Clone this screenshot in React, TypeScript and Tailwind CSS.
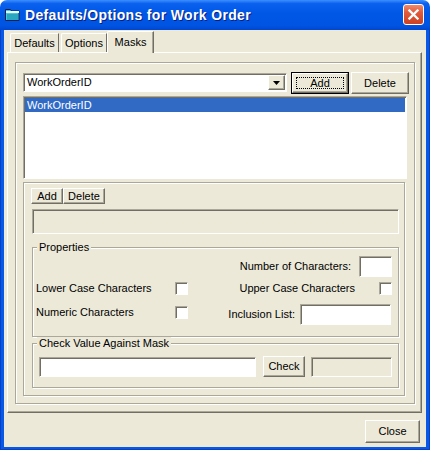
import React from "react";

const raised =
  "bg-[#ECE9D8] border border-t-white border-l-white border-r-[#716F64] border-b-[#716F64] shadow-[inset_-1px_-1px_0_#ACA899]";
const sunken =
  "border border-t-[#ACA899] border-l-[#ACA899] border-r-white border-b-white shadow-[inset_1px_1px_0_#716F64]";
const etched =
  "border border-[#ACA899] shadow-[inset_1px_1px_0_#fff,1px_1px_0_#fff]";

function Check() {
  return <div className={`w-[13px] h-[13px] shrink-0 bg-white ${sunken}`} />;
}

export default function App() {
  return (
    <div className="w-[430px] h-[450px] flex flex-col font-['Liberation_Sans',Arial,sans-serif] text-[11px] leading-[13px] text-black">
      {/* Title bar */}
      <div className="h-[30px] shrink-0 rounded-t-[7px] bg-[linear-gradient(to_bottom,#3D8FFF_0%,#0A61EE_12%,#0057E6_45%,#0054E2_85%,#0046D0_100%)] flex items-center">
        <svg width="15" height="13" viewBox="0 0 15 13" className="ml-[5px] mt-[-1px]">
          <path d="M0.5 1.5h5l1 1.5h7.5v9.5h-13.5z" fill="#47C7D6" stroke="#0B1F4F" />
          <rect x="1" y="3" width="13" height="2" fill="#E8FBFF" />
          <rect x="2" y="6" width="11" height="6" fill="#2AA7C0" />
        </svg>
        <span className="ml-[5px] text-white font-bold text-[14px] tracking-[0.35px] leading-[16px] [text-shadow:1px_1px_0_#0A1E80]">
          Defaults/Options for Work Order
        </span>
        <div className="ml-auto mr-[6px] mt-[-1px] w-[21px] h-[21px] rounded-[3px] border border-white bg-[linear-gradient(to_bottom,#EE8A6C_0%,#E0593A_40%,#CC4222_100%)] flex items-center justify-center">
          <svg width="11" height="11" viewBox="0 0 11 11">
            <path d="M1.5 1.5l8 8M9.5 1.5l-8 8" stroke="white" strokeWidth="2.3" strokeLinecap="square" />
          </svg>
        </div>
      </div>

      {/* Frame */}
      <div className="flex-1 flex flex-col bg-[#0858E8] px-[4px] pb-[3px] shadow-[inset_1px_0_0_#0A3FC4,inset_-1px_0_0_#0A3FC4,inset_0_-1px_0_#0A3FC4]">
        <div className="flex-1 bg-[#ECE9D8] flex flex-col">
          {/* Tabs */}
          <div className="h-[22px] flex items-end pl-[6px]">
            <div className="w-[49px] h-[19px] flex items-center justify-center border-t border-l border-white border-r border-r-[#716F64] rounded-tl-[2px]">
              Defaults
            </div>
            <div className="ml-[2px] w-[46px] h-[19px] flex items-center justify-center border-t border-l border-white border-r border-r-[#716F64] rounded-tl-[2px]">
              Options
            </div>
            <div className="relative z-10 mb-[-1px] w-[47px] h-[22px] bg-[#ECE9D8] flex items-center justify-center border-t border-l border-white border-r border-r-[#716F64] shadow-[inset_-1px_0_0_#ACA899] rounded-tl-[2px]">
              Masks
            </div>
          </div>

          {/* Tab panel */}
          <div className="ml-[3px] w-[415px] h-[361px] border border-t-white border-l-white border-r-[#716F64] border-b-[#716F64] shadow-[inset_-1px_-1px_0_#ACA899] pl-[7px] pt-[9px]">
            <div className={`w-[400px] h-[342px] ${etched} pl-[7px] pt-[9px]`}>
              {/* combo row */}
              <div className="flex items-start h-[22px]">
                <div className={`mt-[1px] w-[264px] h-[19px] bg-white ${sunken} flex items-center`}>
                  <span className="ml-[3px] flex-1">WorkOrderID</span>
                  <div className={`w-[17px] h-[15px] mr-[1px] ${raised} flex items-center justify-center`}>
                    <svg width="7" height="4" viewBox="0 0 7 4">
                      <path d="M0 0h7L3.5 4z" fill="black" />
                    </svg>
                  </div>
                </div>
                <div className="ml-[4px] w-[58px] h-[22px] border border-black">
                  <div className={`w-full h-full ${raised} flex items-center justify-center p-[3px]`}>
                    <div className="w-full h-full border border-dotted border-black flex items-center justify-center">
                      Add
                    </div>
                  </div>
                </div>
                <div className={`ml-[2px] w-[58px] h-[22px] ${raised} flex items-center justify-center`}>
                  Delete
                </div>
              </div>

              {/* list */}
              <div className={`mt-[2px] w-[384px] h-[83px] bg-white ${sunken} pt-[1px] pl-[1px] pr-[1px]`}>
                <div className="h-[14px] bg-[#316AC5] text-white flex items-center pl-[2px]">WorkOrderID</div>
              </div>

              {/* lower frame */}
              <div className={`mt-[3px] w-[382px] h-[214px] ${etched} pl-[7px] pt-[5px]`}>
                <div className="flex h-[16px]">
                  <div className={`w-[32px] h-[16px] ${raised} flex items-center justify-center`}>Add</div>
                  <div className={`w-[42px] h-[16px] ${raised} flex items-center justify-center`}>Delete</div>
                </div>
                <div className={`mt-[5px] ml-[1px] w-[367px] h-[25px] bg-[#ECE9D8] ${sunken}`} />

                {/* Properties */}
                <div className={`relative mt-[13px] ml-[1px] w-[367px] h-[90px] ${etched}`}>
                  <span className="absolute left-[4px] top-[-7px] px-[2px] bg-[#ECE9D8]">Properties</span>
                  <div className="mt-[8px] h-[21px] flex items-center justify-end pr-[6px]">
                    <span>Number of Characters:</span>
                    <div className={`ml-[8px] w-[33px] h-[21px] bg-white ${sunken}`} />
                  </div>
                  <div className="mt-[5px] h-[13px] flex items-center justify-between pr-[6px] pl-[3px]">
                    <div className="flex items-center">
                      <span className="w-[139px]">Lower Case Characters</span>
                      <Check />
                    </div>
                    <div className="flex items-center">
                      <span>Upper Case Characters</span>
                      <div className="ml-[24px]">
                        <Check />
                      </div>
                    </div>
                  </div>
                  <div className="mt-[9px] h-[21px] flex items-start justify-between pr-[7px] pl-[3px]">
                    <div className="mt-[2px] flex items-center">
                      <span className="w-[139px]">Numeric Characters</span>
                      <Check />
                    </div>
                    <div className="flex items-center h-[21px]">
                      <span>Inclusion List:</span>
                      <div className={`ml-[5px] w-[91px] h-[21px] bg-white ${sunken}`} />
                    </div>
                  </div>
                </div>

                {/* Check value */}
                <div className={`relative mt-[6px] ml-[1px] w-[367px] h-[45px] ${etched}`}>
                  <span className="absolute left-[4px] top-[-7px] px-[2px] bg-[#ECE9D8]">Check Value Against Mask</span>
                  <div className="mt-[12px] h-[21px] flex items-center">
                    <div className={`ml-[6px] w-[217px] h-[20px] bg-white ${sunken}`} />
                    <div className={`ml-[7px] w-[42px] h-[21px] ${raised} flex items-center justify-center`}>Check</div>
                    <div className={`ml-[6px] w-[81px] h-[20px] bg-[#ECE9D8] ${sunken}`} />
                  </div>
                </div>
              </div>
            </div>
          </div>

          {/* Close */}
          <div className={`self-end mr-[6px] mt-[7px] w-[55px] h-[23px] ${raised} flex items-center justify-center`}>
            Close
          </div>
        </div>
      </div>
    </div>
  );
}
